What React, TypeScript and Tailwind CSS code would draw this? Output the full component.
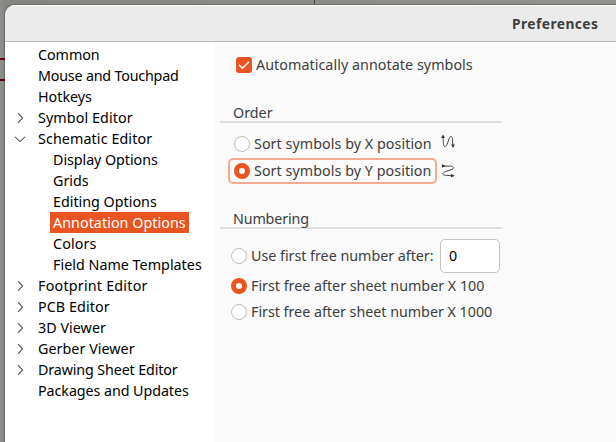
import React from "react";

type Item = { label: string; track: string; arrow?: "right" | "down"; child?: boolean; selected?: boolean };

const items: Item[] = [
  { label: "Common", track: "tracking-[-0.05px]" },
  { label: "Mouse and Touchpad", track: "tracking-[-0.2px]" },
  { label: "Hotkeys", track: "tracking-[0px]" },
  { label: "Symbol Editor", track: "tracking-[0.1px]", arrow: "right" },
  { label: "Schematic Editor", track: "tracking-[0.1px]", arrow: "down" },
  { label: "Display Options", track: "tracking-[-0.06px]", child: true },
  { label: "Grids", track: "tracking-[0px]", child: true },
  { label: "Editing Options", track: "tracking-[0px]", child: true },
  { label: "Annotation Options", track: "tracking-[0.05px]", child: true, selected: true },
  { label: "Colors", track: "tracking-[0.12px]", child: true },
  { label: "Field Name Templates", track: "tracking-[0.02px]", child: true },
  { label: "Footprint Editor", track: "tracking-[0.22px]", arrow: "right" },
  { label: "PCB Editor", track: "tracking-[0.08px]", arrow: "right" },
  { label: "3D Viewer", track: "tracking-[0.04px]", arrow: "right" },
  { label: "Gerber Viewer", track: "tracking-[0.04px]", arrow: "right" },
  { label: "Drawing Sheet Editor", track: "tracking-[-0.13px]", arrow: "right" },
  { label: "Packages and Updates", track: "tracking-[-0.07px]" },
];

function Arrow({ dir }: { dir: "right" | "down" }) {
  return (
    <svg width="12" height="12" viewBox="0 0 12 12" fill="none" stroke="#555" strokeWidth="1.1">
      {dir === "right" ? <path d="M4 1.2 L8.6 6 L4 10.8" /> : <path d="M1 3.8 L6 8.6 L11 3.8" />}
    </svg>
  );
}

function TreeRow({ item }: { item: Item }) {
  return (
    <div className="flex h-[21px] items-center">
      <div className="flex w-[30px] shrink-0 justify-center">{item.arrow && <Arrow dir={item.arrow} />}</div>
      <div
        className={`${item.child ? "ml-[15px]" : ""} ${item.selected ? "w-[139px] bg-[#e95420] text-white" : "text-black"} flex h-[21px] items-center pl-[3px] whitespace-nowrap`}
      >
        <span className={item.track}>{item.label}</span>
      </div>
    </div>
  );
}

function Radio({ on }: { on?: boolean }) {
  return (
    <span
      className={`flex size-4 shrink-0 items-center justify-center rounded-full ${on ? "bg-[#e95420]" : "border border-[#bcbcbc] bg-white"}`}
    >
      {on && <span className="size-[6px] rounded-full bg-white" />}
    </span>
  );
}

function Heading({ label, track }: { label: string; track: string }) {
  return (
    <div className="ml-[5px] flex h-[21px] w-[282px] items-center border-b-2 border-[#dedede] pt-[2px] pl-[13px]">
      <span className={track}>{label}</span>
    </div>
  );
}

function SortIcon({ axis }: { axis: "x" | "y" }) {
  return (
    <svg
      className={axis === "x" ? "mb-[4px]" : ""}
      width="14"
      height="14"
      viewBox="0 0 14 14"
      fill="none"
      stroke="#4a4a4a"
      strokeWidth="1"
    >
      {axis === "x" ? (
        <>
          <path d="M2 2 L2.4 8.5 C2.7 12.6 4.8 12.6 6.2 9.2 L8.3 3.2 C9.3 .6 11.1 .8 11.4 3.8 L11.8 10" />
          <path d="M2 -.6 L3.9 3.1 H.1 Z M12 13 L10.1 9.4 H13.9 Z" fill="#333" stroke="none" />
        </>
      ) : (
        <>
          <path d="M2 2 L9.5 2.2 C13.6 2.5 13.4 4.6 9.8 5.8 L4.4 7.7 C.9 9 1 11 4.4 11.3 L11 11.7" />
          <path d="M4.8 2 L.9 .2 V3.8 Z M13.8 11.8 L10 10 V13.6 Z" fill="#333" stroke="none" />
        </>
      )}
    </svg>
  );
}

export default function App() {
  return (
    <div className="relative flex h-[442px] w-[616px] flex-col overflow-hidden bg-[linear-gradient(90deg,#8f8f8b,#858581_5px,#92928e)] pt-[4px] pl-[4px] font-['Noto_Sans',sans-serif] text-[14.3px] leading-[20px] text-[#3d3d3d]">
      <div className="absolute top-0 left-[314px] h-[4px] w-px bg-[#444]" />
      <div className="absolute top-[58px] left-0 h-[2px] w-[5px] bg-[#600000]" />
      <div className="absolute top-[79px] left-0 h-[2px] w-[5px] bg-[#600000]" />
      <div className="flex flex-1 flex-col overflow-hidden rounded-tl-[11px] border-t border-l border-[#6a6a67] bg-white">
        <header className="flex h-[37px] shrink-0 items-center border-t border-b border-t-white border-b-[#b9b9b9] bg-[#ebebeb] pl-[507px] text-[13.8px] font-bold">
          <span className="tracking-[0.43px]">Preferences</span>
        </header>
        <div className="flex flex-1">
          <nav className="w-[210px] shrink-0 bg-white pt-[2px]">
            {items.map((it) => (
              <TreeRow key={it.label} item={it} />
            ))}
          </nav>
          <main className="flex-1 bg-[#fafafa] pt-[13px]">
            <div className="ml-[21px] flex h-[20px] items-center gap-[4px]">
              <span className="flex size-4 items-center justify-center rounded-[3px] bg-[#e95420]">
                <svg width="12" height="12" viewBox="0 0 12 12" fill="none" stroke="#fff" strokeWidth="1.5">
                  <path d="M1 5.8 L4.4 9.2 L11 2.8" />
                </svg>
              </span>
              <span className="tracking-[0.05px]">Automatically annotate symbols</span>
            </div>
            <div className="mt-[27px]">
              <Heading label="Order" track="tracking-[0px]" />
            </div>
            <div className="mt-[8px] ml-[13px] flex h-[26px] items-center">
              <div className="flex w-[213px] items-center gap-[4px] pl-[6px]">
                <Radio />
                <span className="tracking-[0.05px]">Sort symbols by X position</span>
              </div>
              <SortIcon axis="x" />
            </div>
            <div className="mt-px ml-[13px] flex h-[26px] items-center">
              <div className="mr-[4px] flex h-[26px] w-[209px] items-center gap-[4px] rounded-[5px] border-2 border-[#f4aa90] pl-[4px]">
                <Radio on />
                <span className="tracking-[0.05px]">Sort symbols by Y position</span>
              </div>
              <SortIcon axis="y" />
            </div>
            <div className="mt-[24px]">
              <Heading label="Numbering" track="tracking-[-0.15px]" />
            </div>
            <div className="mt-[10px] ml-[16px] flex h-[34px] items-center gap-[4px]">
              <Radio />
              <span className="w-[185px] tracking-[-0.02px] whitespace-nowrap">Use first free number after:</span>
              <div className="flex h-[34px] w-[60px] items-center rounded-[5px] border border-[#c4c4c4] bg-white pl-[8px] text-black">
                0
              </div>
            </div>
            <div className="mt-[3px] ml-[16px] flex h-[20px] items-center gap-[4px]">
              <Radio on />
              <span className="tracking-[-0.01px]">First free after sheet number X 100</span>
            </div>
            <div className="mt-[6px] ml-[16px] flex h-[20px] items-center gap-[4px]">
              <Radio />
              <span className="tracking-[-0.02px]">First free after sheet number X 1000</span>
            </div>
          </main>
        </div>
      </div>
    </div>
  );
}
